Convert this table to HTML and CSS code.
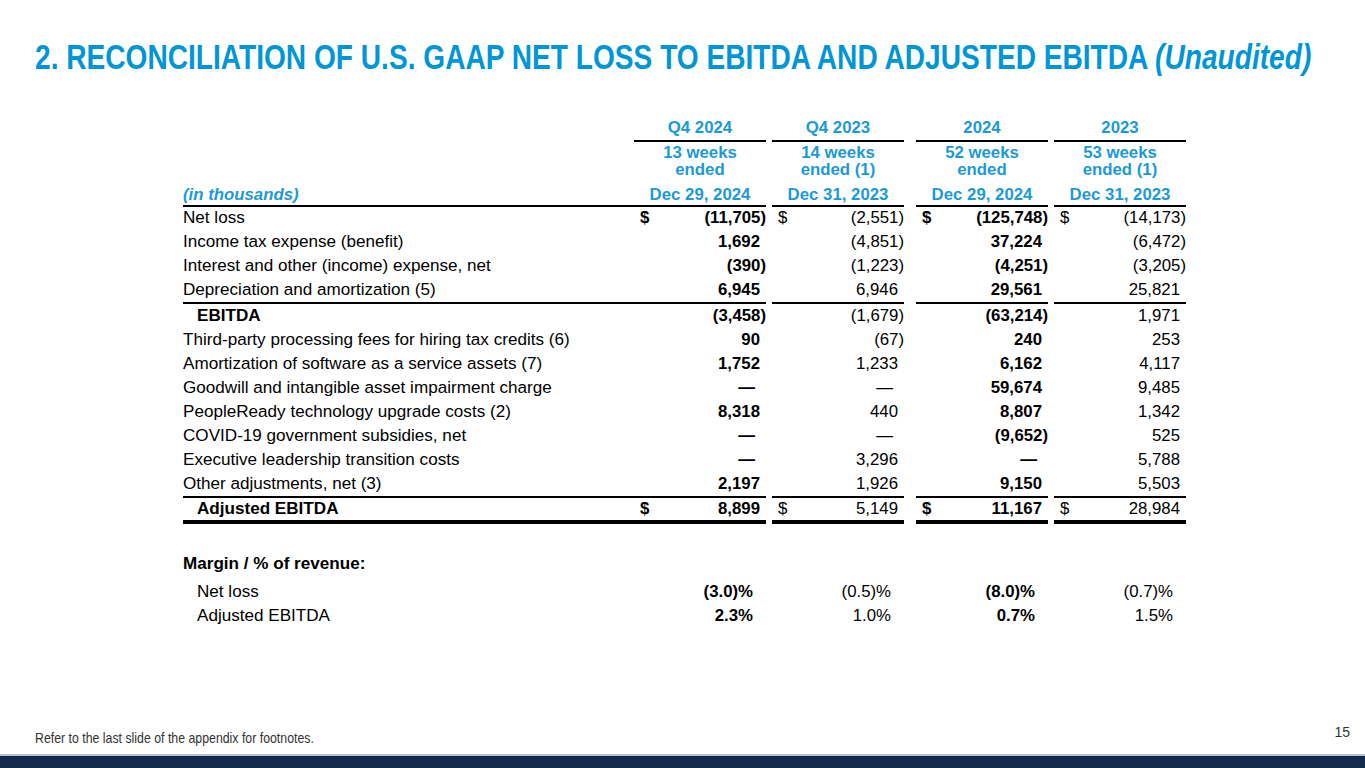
FILE: index.html
```html
<!DOCTYPE html>
<html lang="en">
<head>
<meta charset="utf-8">
<title>Reconciliation of U.S. GAAP Net Loss to EBITDA and Adjusted EBITDA</title>
<link rel="stylesheet" href="styles.css">
</head>
<body>
<div class="slide">
  <h1 class="title">2. RECONCILIATION OF U.S. GAAP NET LOSS TO EBITDA AND ADJUSTED EBITDA <em>(Unaudited)</em></h1>

  <div class="recon">
    <div class="row hdr1">
      <div class="lbl"></div>
      <div class="c">Q4 2024</div>
      <div class="c">Q4 2023</div>
      <div class="c">2024</div>
      <div class="c">2023</div>
    </div>
    <div class="row hdr2">
      <div class="lbl"></div>
      <div class="c">13 weeks<br>ended</div>
      <div class="c">14 weeks<br>ended (1)</div>
      <div class="c">52 weeks<br>ended</div>
      <div class="c">53 weeks<br>ended (1)</div>
    </div>
    <div class="row hdr3 rule">
      <div class="lbl">(in thousands)</div>
      <div class="c">Dec 29, 2024</div>
      <div class="c">Dec 31, 2023</div>
      <div class="c">Dec 29, 2024</div>
      <div class="c">Dec 31, 2023</div>
    </div>

    <div class="row">
      <div class="lbl">Net loss</div>
      <div class="v b"><span>$</span><span class="n neg">(11,705)</span></div>
      <div class="v"><span>$</span><span class="n neg">(2,551)</span></div>
      <div class="v b"><span>$</span><span class="n neg">(125,748)</span></div>
      <div class="v"><span>$</span><span class="n neg">(14,173)</span></div>
    </div>
    <div class="row">
      <div class="lbl">Income tax expense (benefit)</div>
      <div class="v b"><span class="n">1,692</span></div>
      <div class="v"><span class="n neg">(4,851)</span></div>
      <div class="v b"><span class="n">37,224</span></div>
      <div class="v"><span class="n neg">(6,472)</span></div>
    </div>
    <div class="row">
      <div class="lbl">Interest and other (income) expense, net</div>
      <div class="v b"><span class="n neg">(390)</span></div>
      <div class="v"><span class="n neg">(1,223)</span></div>
      <div class="v b"><span class="n neg">(4,251)</span></div>
      <div class="v"><span class="n neg">(3,205)</span></div>
    </div>
    <div class="row rule">
      <div class="lbl">Depreciation and amortization (5)</div>
      <div class="v b"><span class="n">6,945</span></div>
      <div class="v"><span class="n">6,946</span></div>
      <div class="v b"><span class="n">29,561</span></div>
      <div class="v"><span class="n">25,821</span></div>
    </div>
    <div class="row">
      <div class="lbl ind b">EBITDA</div>
      <div class="v b"><span class="n neg">(3,458)</span></div>
      <div class="v"><span class="n neg">(1,679)</span></div>
      <div class="v b"><span class="n neg">(63,214)</span></div>
      <div class="v"><span class="n">1,971</span></div>
    </div>
    <div class="row">
      <div class="lbl">Third-party processing fees for hiring tax credits (6)</div>
      <div class="v b"><span class="n">90</span></div>
      <div class="v"><span class="n neg">(67)</span></div>
      <div class="v b"><span class="n">240</span></div>
      <div class="v"><span class="n">253</span></div>
    </div>
    <div class="row">
      <div class="lbl">Amortization of software as a service assets (7)</div>
      <div class="v b"><span class="n">1,752</span></div>
      <div class="v"><span class="n">1,233</span></div>
      <div class="v b"><span class="n">6,162</span></div>
      <div class="v"><span class="n">4,117</span></div>
    </div>
    <div class="row">
      <div class="lbl">Goodwill and intangible asset impairment charge</div>
      <div class="v b"><span class="n dash">—</span></div>
      <div class="v"><span class="n dash">—</span></div>
      <div class="v b"><span class="n">59,674</span></div>
      <div class="v"><span class="n">9,485</span></div>
    </div>
    <div class="row">
      <div class="lbl">PeopleReady technology upgrade costs (2)</div>
      <div class="v b"><span class="n">8,318</span></div>
      <div class="v"><span class="n">440</span></div>
      <div class="v b"><span class="n">8,807</span></div>
      <div class="v"><span class="n">1,342</span></div>
    </div>
    <div class="row">
      <div class="lbl">COVID-19 government subsidies, net</div>
      <div class="v b"><span class="n dash">—</span></div>
      <div class="v"><span class="n dash">—</span></div>
      <div class="v b"><span class="n neg">(9,652)</span></div>
      <div class="v"><span class="n">525</span></div>
    </div>
    <div class="row">
      <div class="lbl">Executive leadership transition costs</div>
      <div class="v b"><span class="n dash">—</span></div>
      <div class="v"><span class="n">3,296</span></div>
      <div class="v b"><span class="n dash">—</span></div>
      <div class="v"><span class="n">5,788</span></div>
    </div>
    <div class="row rule">
      <div class="lbl">Other adjustments, net (3)</div>
      <div class="v b"><span class="n">2,197</span></div>
      <div class="v"><span class="n">1,926</span></div>
      <div class="v b"><span class="n">9,150</span></div>
      <div class="v"><span class="n">5,503</span></div>
    </div>
    <div class="row total">
      <div class="lbl ind b">Adjusted EBITDA</div>
      <div class="v b"><span>$</span><span class="n">8,899</span></div>
      <div class="v"><span>$</span><span class="n">5,149</span></div>
      <div class="v b"><span>$</span><span class="n">11,167</span></div>
      <div class="v"><span>$</span><span class="n">28,984</span></div>
    </div>

    <div class="row mhead">
      <div class="lbl b">Margin / % of revenue:</div>
    </div>
    <div class="row pct first">
      <div class="lbl ind">Net loss</div>
      <div class="v b"><span class="n">(3.0)%</span></div>
      <div class="v"><span class="n">(0.5)%</span></div>
      <div class="v b"><span class="n">(8.0)%</span></div>
      <div class="v"><span class="n">(0.7)%</span></div>
    </div>
    <div class="row pct">
      <div class="lbl ind">Adjusted EBITDA</div>
      <div class="v b"><span class="n">2.3%</span></div>
      <div class="v"><span class="n">1.0%</span></div>
      <div class="v b"><span class="n">0.7%</span></div>
      <div class="v"><span class="n">1.5%</span></div>
    </div>
  </div>

  <footer class="foot">
    <span class="note">Refer to the last slide of the appendix for footnotes.</span>
    <span class="page">15</span>
  </footer>
  <div class="bar"></div>
</div>
</body>
</html>
```

FILE: styles.css
```css
* { box-sizing: border-box; }

html, body {
  margin: 0;
  padding: 0;
  background: #ffffff;
}

.slide {
  width: 1365px;
  height: 768px;
  display: flex;
  flex-direction: column;
  font-family: "Liberation Sans", Arial, sans-serif;
  color: #000;
  overflow: hidden;
}

.title {
  align-self: flex-start;
  margin: 37px 0 0 35px;
  height: 40px;
  font-family: "Liberation Sans", Arial, sans-serif;
  font-weight: 700;
  font-size: 35px;
  line-height: 40px;
  color: #0096d6;
  white-space: nowrap;
  transform: scaleX(0.803);
  transform-origin: left center;
}

.title em {
  font-style: italic;
}

.recon {
  margin: 39px 0 0 183px;
  width: 1003px;
  font-size: 16.8px;
}

.row {
  display: grid;
  grid-template-columns: 451px 132px 138px 144px 138px;
  height: 24px;
  line-height: 24px;
}

.row > :nth-child(3),
.row > :nth-child(5) { margin-left: 6px; }
.row > :nth-child(4) { margin-left: 12px; }

.lbl {
  white-space: nowrap;
  font-size: 17.1px;
}

.ind { padding-left: 14px; }
.b { font-weight: 700; }

/* header */
.hdr1, .hdr2, .hdr3 {
  color: #1c9ad6;
  font-weight: 700;
}

.hdr3 .lbl { font-size: 16.8px; }

.c { text-align: center; }

.hdr1 .c {
  border-bottom: 2px solid #000;
}
.hdr1 { height: 26px; }

.hdr2 {
  height: 42px;
  line-height: 16.5px;
  padding-top: 3px;
}

.hdr3 .lbl {
  font-style: italic;
}

.rule > * {
  border-bottom: 2px solid #000;
}
.row.rule { height: 26px; }
.row.hdr3.rule {
  height: 22px;
  line-height: 21px;
}

/* values */
.v {
  display: flex;
  justify-content: flex-end;
  white-space: nowrap;
}

.v span:first-child:not(.n) {
  margin-right: auto;
  padding-left: 6px;
}

.n { padding-right: 6px; }
.n.neg { padding-right: 0; }
.n.dash { padding-right: 11px; }

.total {
  height: 25px;
  line-height: 22px;
}
.total > * {
  border-bottom: 4px solid #000;
}

.mhead {
  margin-top: 29px;
}

.pct .n { padding-right: 13px; }
.pct.first { margin-top: 4px; }

/* footer */
.foot {
  margin-top: auto;
  height: 20px;
  padding: 0 15px 0 35px;
  display: flex;
  justify-content: space-between;
  align-items: flex-start;
  margin-bottom: 7px;
}

.note {
  display: inline-block;
  font-size: 14.5px;
  line-height: 20px;
  color: #333;
  margin-top: 1px;
  white-space: nowrap;
  transform: scaleX(0.85);
  transform-origin: left center;
}

.page {
  font-size: 14px;
  line-height: 18px;
  color: #333;
  margin-top: -4px;
}

.bar {
  height: 14px;
  background: #142a4b;
  border-top: 2px solid #b6c2cf;
  flex-shrink: 0;
}
```
